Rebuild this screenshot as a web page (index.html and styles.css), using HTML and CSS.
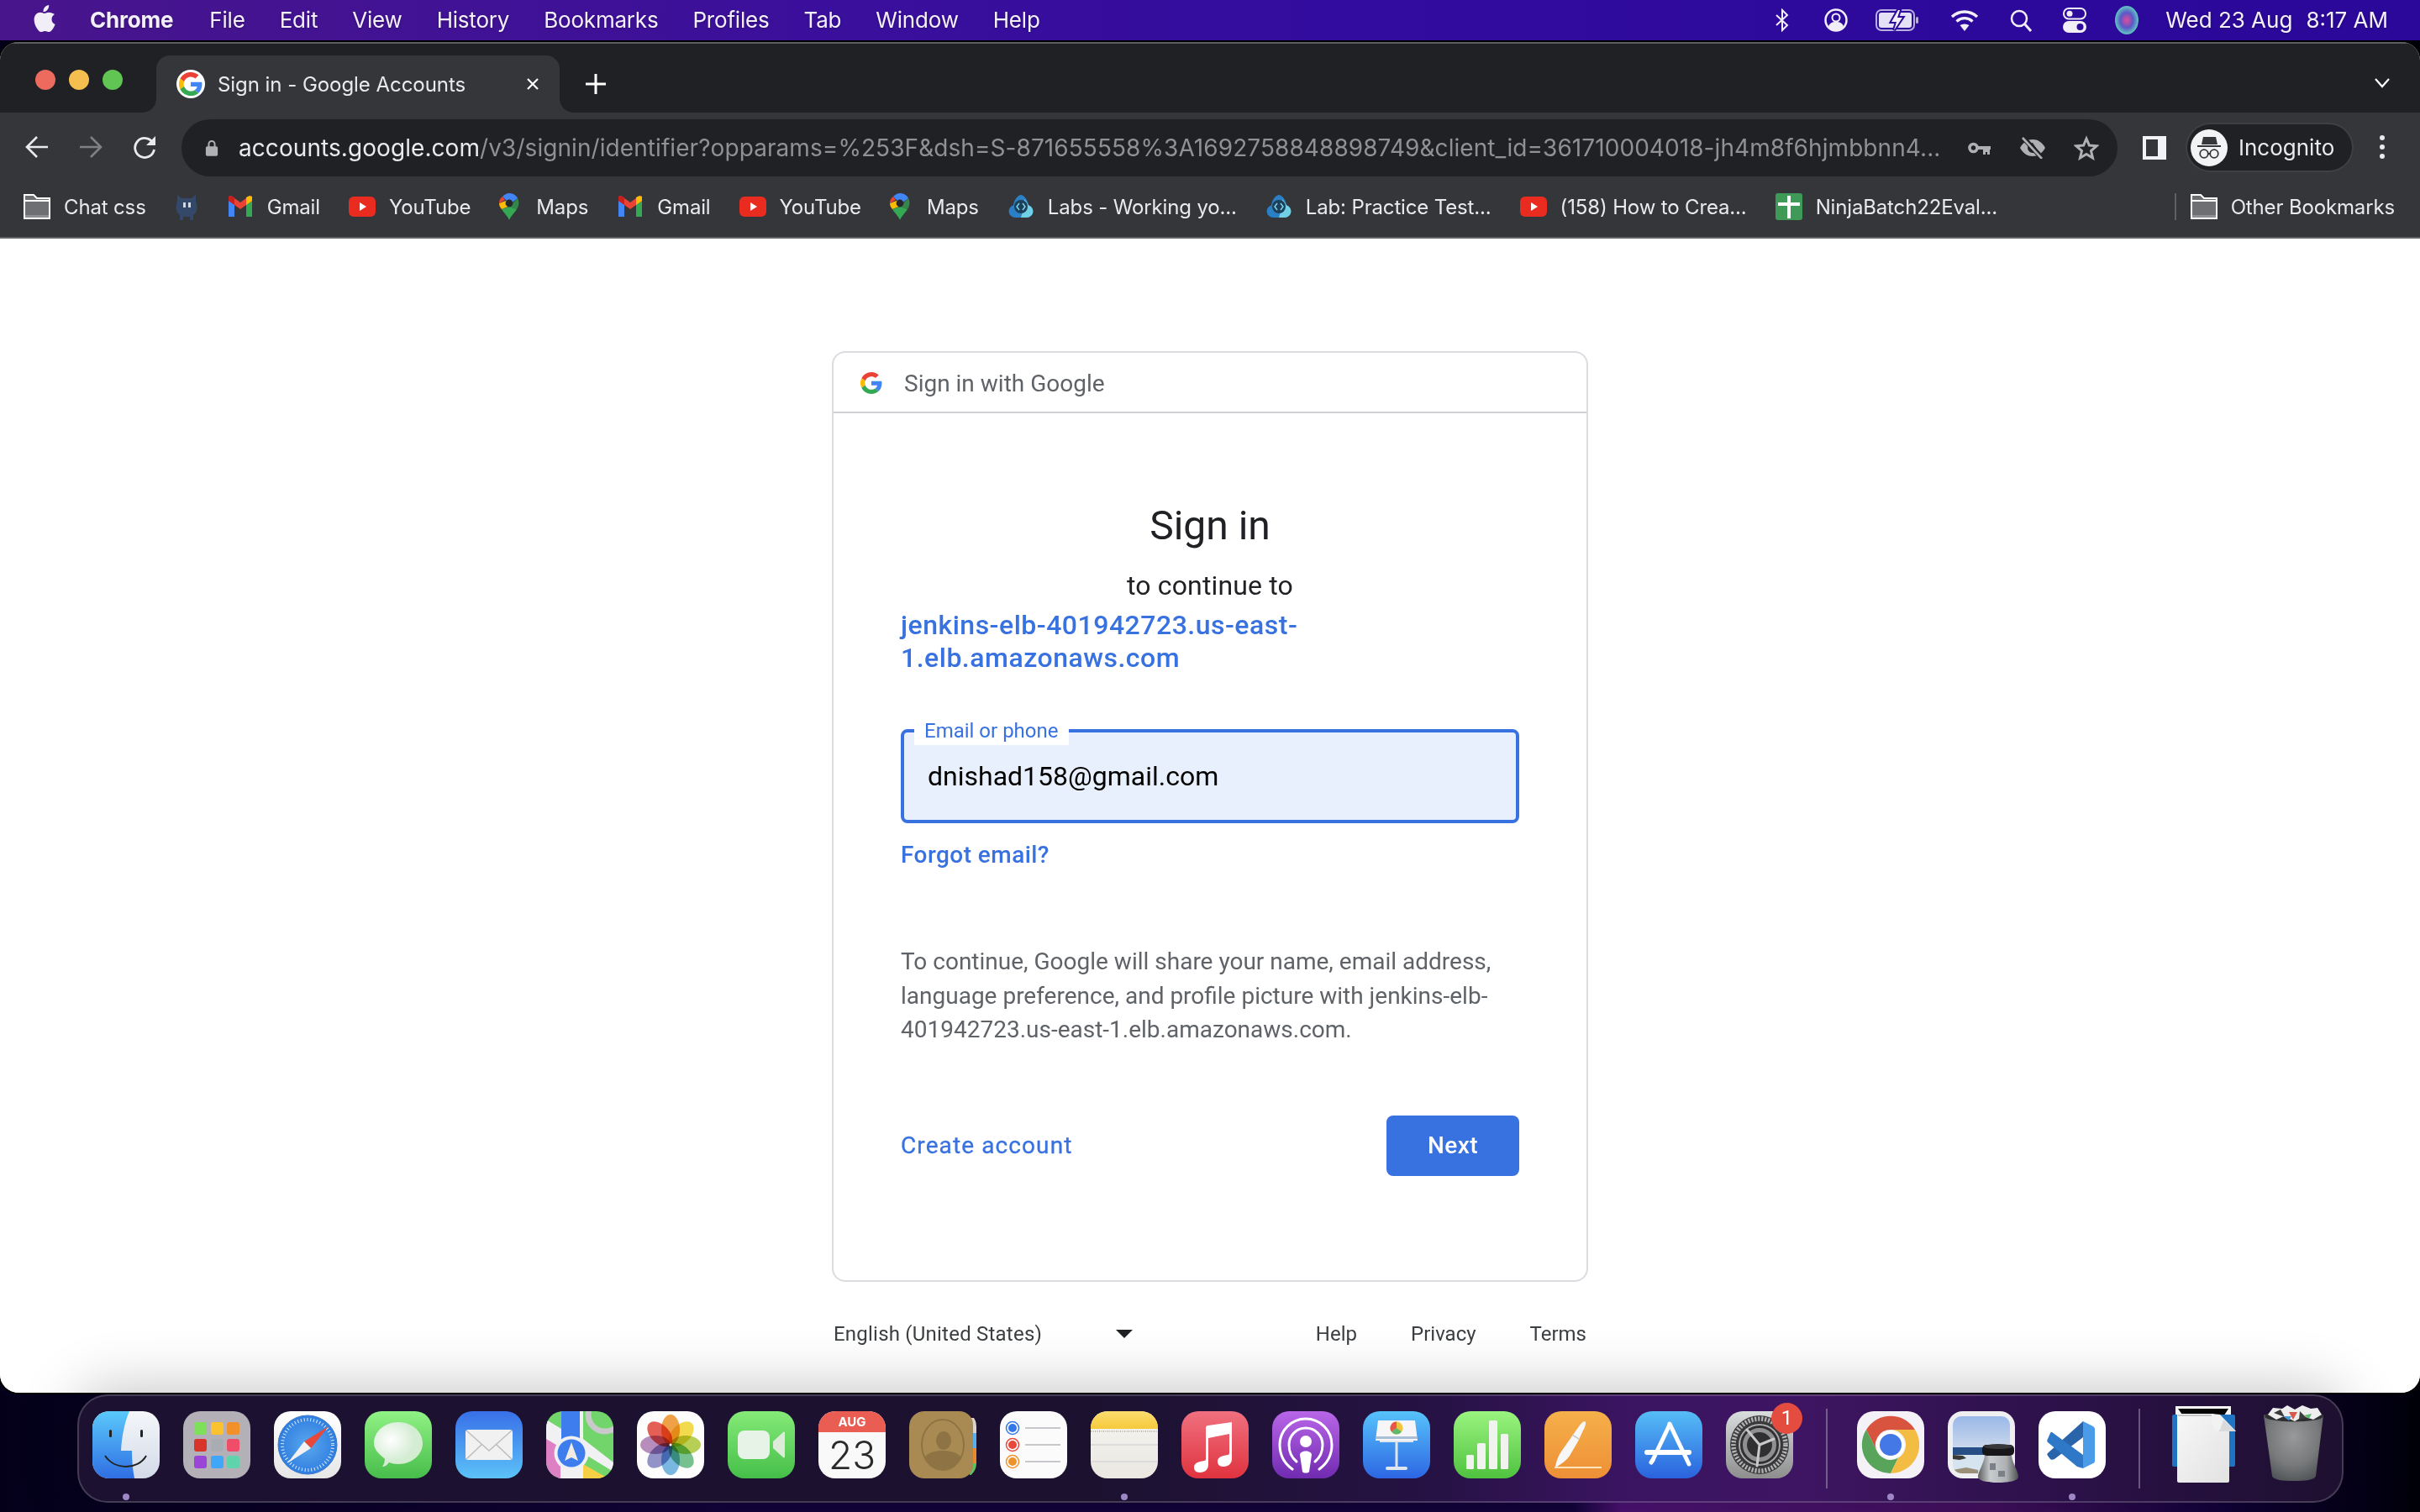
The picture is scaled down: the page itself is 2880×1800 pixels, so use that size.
FILE: index.html
```html
<!DOCTYPE html>
<html lang="en">
<head>
<meta charset="utf-8">
<title>Sign in - Google Accounts</title>
<link rel="stylesheet" href="styles.css">
</head>
<body>
<svg class="sprite" aria-hidden="true">
  <defs>
    <symbol id="g-logo" viewBox="0 0 48 48">
      <path fill="#EA4335" d="M24 9.5c3.54 0 6.71 1.22 9.21 3.6l6.85-6.85C35.9 2.38 30.47 0 24 0 14.62 0 6.51 5.38 2.56 13.22l7.98 6.19C12.43 13.72 17.74 9.5 24 9.5z"/>
      <path fill="#4285F4" d="M46.98 24.55c0-1.57-.15-3.09-.38-4.55H24v9.02h12.94c-.58 2.96-2.26 5.48-4.78 7.18l7.73 6c4.51-4.18 7.09-10.36 7.09-17.65z"/>
      <path fill="#FBBC05" d="M10.53 28.59c-.48-1.45-.76-2.99-.76-4.59s.27-3.14.76-4.59l-7.98-6.19C.92 16.46 0 20.12 0 24c0 3.88.92 7.54 2.56 10.78l7.97-6.19z"/>
      <path fill="#34A853" d="M24 48c6.48 0 11.93-2.13 15.89-5.81l-7.73-6c-2.15 1.45-4.92 2.3-8.16 2.3-6.26 0-11.57-4.22-13.47-9.91l-7.98 6.19C6.51 42.62 14.62 48 24 48z"/>
    </symbol>
    <symbol id="gmail" viewBox="0 0 32 32">
      <path fill="#4285F4" d="M2 28V7l7 5v16z"/>
      <path fill="#34A853" d="M30 28V7l-7 5v16z"/>
      <path fill="#EA4335" d="M2 4v5l14 10 14-10V4l-3-1-11 8L5 3z"/>
      <path fill="#FBBC04" d="M23 5l4-2 3 1v5l-7 5z"/>
      <path fill="#C5221F" d="M9 5L5 3 2 4v5l7 5z"/>
    </symbol>
    <symbol id="yt" viewBox="0 0 32 32">
      <rect x="0" y="4" width="32" height="24" rx="6" fill="#ea2c20"/>
      <path fill="#fff" d="M13 11l8 5-8 5z"/>
    </symbol>
    <symbol id="maps" viewBox="0 0 24 32">
      <path fill="#34A853" d="M12 32c-2-5-6-8-9-13l9-3 9 3c-3 5-7 8-9 13z"/>
      <path fill="#FBBC04" d="M3 19C1 17 0 14 0 12l8-3 5 6z"/>
      <path fill="#4285F4" d="M4 4c2-2 5-4 8-4 4 0 8 2 10 6l-9 7z"/>
      <path fill="#EA4335" d="M4 4C1 6 0 9 0 12l7-4z"/>
      <path fill="#34A853" d="M22 6c2 3 2 9-1 13l-9-3z" opacity=".7"/>
      <circle cx="12" cy="12" r="4.4" fill="#26282b"/>
    </symbol>
    <symbol id="cloud" viewBox="0 0 32 32">
      <path fill="#2b7fc4" d="M9 29a7.500 7.500 0 0 1-2-14.700C8 7 13 2 16 2s8 5 9 12.300A7.500 7.500 0 0 1 23 29z"/>
      <path fill="#6fd0e6" d="M16 29h7a7.500 7.500 0 0 0 2-14.700C24 12 22 9 20 7c1 6-2 15-4 22z"/>
      <circle cx="16" cy="16" r="8" fill="#1c3f5a"/>
      <path fill="none" stroke="#7fd2ea" stroke-width="1.500" d="M14 12l-3 4 3 4M18 12l3 4-3 4"/>
    </symbol>
    <symbol id="folder" viewBox="0 0 32 32">
      <path fill="#6e6f72" stroke="#fff" stroke-width="2" d="M1 30V2h11l4 4h15v24z"/>
      <path fill="none" stroke="#fff" stroke-width="2" d="M1 9h30"/>
      <rect x="2" y="26" width="28" height="3" fill="#8e8f92"/>
    </symbol>
  </defs>
</svg>

<header class="menubar">
  <div class="menu-left">
    <svg class="apple" viewBox="0 0 26 32"><path fill="#f1eef8" d="M18.200 0c.2 2.300-.6 4.200-1.800 5.700-1.300 1.500-3 2.400-4.900 2.300-.2-2.200.7-4.200 1.900-5.500C14.700 1.100 16.600.1 18.200 0zM25 11c-2.500 1.500-3.500 3.600-3.500 6 0 2.800 1.600 5 4.100 6-.7 2-1.700 3.900-3 5.700-1.200 1.700-2.500 3.300-4.300 3.300-1.900 0-2.500-1.100-4.700-1.100s-3 1.100-4.700 1.100c-1.900 0-3.200-1.700-4.500-3.500C2.100 25.600.6 21.200.6 17.500.6 11.900 4.300 8.800 8 8.800c1.900 0 3.500 1.200 4.700 1.200 1.200 0 3-1.300 5.200-1.300 2.700 0 5.400 1 7.100 2.300z"/></svg>
    <span class="menu-app">Chrome</span>
    <span class="menu-item">File</span>
    <span class="menu-item">Edit</span>
    <span class="menu-item">View</span>
    <span class="menu-item">History</span>
    <span class="menu-item">Bookmarks</span>
    <span class="menu-item">Profiles</span>
    <span class="menu-item">Tab</span>
    <span class="menu-item">Window</span>
    <span class="menu-item">Help</span>
  </div>
  <div class="status">
    <svg class="st st-bt" viewBox="0 0 18 28"><path fill="none" stroke="#f1eef8" stroke-width="2" d="M2 8l13 12-6 6V2l6 6L2 20"/></svg>
    <svg class="st st-user" viewBox="0 0 28 30"><circle cx="14" cy="15" r="12.500" fill="none" stroke="#f1eef8" stroke-width="2.500"/><circle cx="14" cy="12" r="4.500" fill="none" stroke="#f1eef8" stroke-width="2"/><path fill="#f1eef8" d="M5 22c2-4 5-5 9-5s7 1 9 5c-2 4-6 6-9 6s-7-2-9-6z"/></svg>
    <svg class="st st-batt" viewBox="0 0 52 30"><rect x="1" y="3" width="45" height="24" rx="6" fill="none" stroke="#b7aee0" stroke-width="2"/><rect x="4" y="6" width="39" height="18" rx="3" fill="#e4e0f6"/><rect x="48" y="11" width="3" height="8" rx="1.500" fill="#b7aee0"/><path fill="#2c0a9a" stroke="#2c0a9a" stroke-width="4" d="M27 3L19 17h6l-3 10 10-15h-6l3-9z"/><path fill="#f1eef8" d="M27 3L19 17h6l-3 10 10-15h-6l3-9z"/></svg>
    <svg class="st st-wifi" viewBox="0 0 36 28"><path fill="none" stroke="#f1eef8" stroke-width="3.500" d="M3 10c9-8 21-8 30 0M8.500 15.500c6-5 13-5 19 0"/><path fill="#f1eef8" d="M18 27l-5.500-7c3.500-2 7.500-2 11 0z"/></svg>
    <svg class="st st-search" viewBox="0 0 28 28"><circle cx="12" cy="12" r="9" fill="none" stroke="#f1eef8" stroke-width="2.500"/><path stroke="#f1eef8" stroke-width="3" d="M18.500 18.500L26 27"/></svg>
    <svg class="st st-ctrl" viewBox="0 0 28 30"><rect x="1" y="1" width="26" height="12.500" rx="6" fill="none" stroke="#f1eef8" stroke-width="2"/><circle cx="8" cy="7.200" r="3.500" fill="#f1eef8"/><rect x="0" y="16" width="28" height="14" rx="7" fill="#f1eef8"/><circle cx="20.500" cy="23" r="4" fill="#2c0a9a"/></svg>
    <svg class="st st-siri" viewBox="0 0 28 34"><defs><radialGradient id="siriG" cx=".5" cy=".5" r=".6"><stop offset="0" stop-color="#e24d9a"/><stop offset=".45" stop-color="#5a58c8"/><stop offset=".8" stop-color="#5fc0c0"/><stop offset="1" stop-color="#3d3a70"/></radialGradient></defs><ellipse cx="14" cy="17" rx="14" ry="17" fill="url(#siriG)"/></svg>
    <span class="clock">Wed 23 Aug</span>
    <span class="clock clock-time">8:17 AM</span>
  </div>
</header>

<main class="window">
  <div class="tabstrip">
    <div class="lights">
      <span class="light light-r"></span>
      <span class="light light-y"></span>
      <span class="light light-g"></span>
    </div>
    <div class="tab">
      <svg class="favicon" viewBox="-5 -5 58 58"><circle cx="24" cy="24" r="29" fill="#fff"/><use href="#g-logo" x="0" y="0" width="48" height="48"/></svg>
      <span class="tab-title">Sign in - Google Accounts</span>
      <svg class="tab-close" viewBox="0 0 16 16"><path stroke="#fff" stroke-width="2.200" d="M2 2l12 12M14 2L2 14"/></svg>
    </div>
    <svg class="tab-new" viewBox="0 0 24 24"><path stroke="#fff" stroke-width="3" d="M12 0v24M0 12h24"/></svg>
    <svg class="tab-list" viewBox="0 0 18 12"><path fill="none" stroke="#fff" stroke-width="2.200" d="M1 1l8 9 8-9"/></svg>
  </div>

  <div class="toolbar">
    <svg class="nav" viewBox="0 0 28 28"><path fill="none" stroke="#e8eaed" stroke-width="2.600" d="M27 14H3M14 2L2 14l12 12"/></svg>
    <svg class="nav" viewBox="0 0 28 28"><path fill="none" stroke="#7f8083" stroke-width="2.600" d="M1 14h24M14 2l12 12-12 12"/></svg>
    <svg class="nav" viewBox="0 0 28 28"><path fill="none" stroke="#e8eaed" stroke-width="2.800" d="M24 9a11.500 11.500 0 1 0 1.500 8"/><path fill="#e8eaed" d="M27 1v11H16z"/></svg>
    <div class="address">
      <svg class="lock" viewBox="0 0 18 22"><path fill="none" stroke="#aeb0b3" stroke-width="2.200" d="M5 10V6a4 4 0 0 1 8 0v4"/><rect x="1" y="9" width="16" height="13" rx="2" fill="#aeb0b3"/></svg>
      <div class="url"><span class="url-host">accounts.google.com</span><span class="url-rest">/v3/signin/identifier?opparams=%253F&amp;dsh=S-871655558%3A1692758848898749&amp;client_id=361710004018-jh4m8f6hjmbbnn4...</span></div>
      <svg class="addr-ic addr-key" viewBox="0 0 27 15"><circle cx="6.500" cy="7" r="4.500" fill="none" stroke="#aeb0b3" stroke-width="3.600"/><path fill="#aeb0b3" d="M11 5h16v4h-1v6h-3v-3h-2v3h-3V9h-7z"/></svg>
      <svg class="addr-ic addr-eye" viewBox="0 0 30 26"><path fill="#aeb0b3" d="M0 13C4 6 9 3 15 3s11 3 15 10c-4 7-9 10-15 10S4 20 0 13z"/><path fill="#202124" d="M9 13a6 6 0 0 1 6-6l6 9c-2 3-4 3-6 3-3 0-6-3-6-6z"/><path stroke="#202124" stroke-width="6" d="M3 0l23 25"/><path stroke="#aeb0b3" stroke-width="2.600" d="M3 1l23 25"/></svg>
      <svg class="addr-ic addr-star" viewBox="0 0 30 30"><path fill="none" stroke="#aeb0b3" stroke-width="3" d="M15 4l3.400 8 8.600.8-6.500 5.700 2 8.500-7.500-4.500L7.500 27l2-8.500L3 12.800l8.600-.8z"/></svg>
    </div>
    <div class="side-panel"><span class="side-panel-in"></span></div>
    <div class="profile">
      <svg class="profile-av" viewBox="0 0 44 44"><circle cx="22" cy="22" r="22" fill="#f1f3f4"/><path fill="#35363a" d="M15 9h15l2 9H13z"/><rect x="8" y="19" width="28" height="2" fill="#35363a"/><circle cx="16" cy="29" r="4.800" fill="none" stroke="#35363a" stroke-width="1.800"/><circle cx="28" cy="29" r="4.800" fill="none" stroke="#35363a" stroke-width="1.800"/><path stroke="#35363a" stroke-width="1.800" d="M20 29h4"/></svg>
      <span class="profile-name">Incognito</span>
    </div>
    <div class="kebab"><span></span><span></span><span></span></div>
  </div>

  <div class="bookmarks">
    <div class="bm bm-first"><svg class="bm-ic"><use href="#folder"/></svg><span>Chat css</span></div>
    <div class="bm bm-solo"><svg class="bm-ic bm-bot" viewBox="0 0 28 32"><path fill="#34486a" d="M3 2l5 4h12l5-4v8c2 4 2 9 0 13l-3 3v6h-4v-4h-8v4H6v-6l-3-3C1 19 1 14 3 10z"/><rect x="10" y="11" width="3" height="6" fill="#cfd8e6"/><rect x="16" y="11" width="3" height="6" fill="#cfd8e6"/></svg></div>
    <div class="bm"><svg class="bm-ic"><use href="#gmail"/></svg><span>Gmail</span></div>
    <div class="bm"><svg class="bm-ic"><use href="#yt"/></svg><span>YouTube</span></div>
    <div class="bm"><svg class="bm-ic bm-pin"><use href="#maps"/></svg><span>Maps</span></div>
    <div class="bm"><svg class="bm-ic"><use href="#gmail"/></svg><span>Gmail</span></div>
    <div class="bm"><svg class="bm-ic"><use href="#yt"/></svg><span>YouTube</span></div>
    <div class="bm"><svg class="bm-ic bm-pin"><use href="#maps"/></svg><span>Maps</span></div>
    <div class="bm"><svg class="bm-ic"><use href="#cloud"/></svg><span>Labs - Working yo...</span></div>
    <div class="bm"><svg class="bm-ic"><use href="#cloud"/></svg><span>Lab: Practice Test...</span></div>
    <div class="bm"><svg class="bm-ic"><use href="#yt"/></svg><span>(158) How to Crea...</span></div>
    <div class="bm"><svg class="bm-ic" viewBox="0 0 32 32"><rect width="32" height="32" rx="3" fill="#3f9a58"/><path fill="#fff" d="M14 3h4v8h11v4H18v15h-4V15H3v-4h11z"/></svg><span>NinjaBatch22Eval...</span></div>
    <div class="bm-divider"></div>
    <div class="bm bm-other"><svg class="bm-ic"><use href="#folder"/></svg><span>Other Bookmarks</span></div>
  </div>

  <section class="page">
    <div class="card">
      <div class="card-head">
        <svg class="card-logo"><use href="#g-logo"/></svg>
        <span>Sign in with Google</span>
      </div>
      <div class="card-body">
        <h1 class="title">Sign in</h1>
        <p class="subtitle">to continue to</p>
        <a class="app-link">jenkins-elb-401942723.us-east-<br>1.elb.amazonaws.com</a>
        <div class="field">
          <span class="field-label">Email or phone</span>
          <span class="field-value">dnishad158@gmail.com</span>
        </div>
        <a class="forgot">Forgot email?</a>
        <p class="notice">To continue, Google will share your name, email address, language preference, and profile picture with jenkins-elb-401942723.us-east-1.elb.amazonaws.com.</p>
        <div class="actions">
          <a class="create">Create account</a>
          <button class="next">Next</button>
        </div>
      </div>
    </div>
    <footer class="foot">
      <div class="lang"><span>English (United States)</span><i class="caret"></i></div>
      <div class="foot-links"><span>Help</span><span>Privacy</span><span>Terms</span></div>
    </footer>
  </section>
</main>

<nav class="dock">
  <div class="app"><svg class="ai" viewBox="0 0 80 80"><defs><linearGradient id="fa" x1="0" y1="0" x2="0" y2="1"><stop offset="0" stop-color="#5ac8fa"/><stop offset="1" stop-color="#2f6fe4"/></linearGradient><linearGradient id="fb" x1="0" y1="0" x2="0" y2="1"><stop offset="0" stop-color="#f4f6fa"/><stop offset="1" stop-color="#d3dbe8"/></linearGradient></defs><rect width="80" height="80" fill="url(#fb)"/><path fill="url(#fa)" d="M0 0h44c-6 14-9 30-10 47h13c0 12 1 23 3 33H0z"/><rect x="20" y="22" width="3" height="9" rx="1.500" fill="#222"/><rect x="57" y="22" width="3" height="9" rx="1.500" fill="#222"/><path fill="none" stroke="#222" stroke-width="2" d="M15 53c6 9 16 13 25 13s19-4 24-13"/></svg><i class="dot on"></i></div>
  <div class="app"><svg class="ai" viewBox="0 0 80 80"><rect width="80" height="80" fill="#b3b0b8"/><g><rect x="13" y="13" width="15" height="15" rx="3" fill="#7ee05a"/><rect x="33" y="13" width="15" height="15" rx="3" fill="#f9c22e"/><rect x="52" y="13" width="15" height="15" rx="3" fill="#f2902c"/><rect x="13" y="33" width="15" height="15" rx="3" fill="#d8342a"/><rect x="33" y="33" width="15" height="15" rx="3" fill="#a7adb2"/><rect x="52" y="33" width="15" height="15" rx="3" fill="#ef4d68"/><rect x="13" y="53" width="15" height="15" rx="3" fill="#9a44d8"/><rect x="33" y="53" width="15" height="15" rx="3" fill="#3fa6f8"/><rect x="52" y="53" width="15" height="15" rx="3" fill="#5fd3ac"/></g></svg><i class="dot"></i></div>
  <div class="app"><svg class="ai" viewBox="0 0 80 80"><defs><linearGradient id="sa" x1="0" y1="0" x2="0" y2="1"><stop offset="0" stop-color="#ffffff"/><stop offset="1" stop-color="#e6e6e6"/></linearGradient><radialGradient id="sb"><stop offset="0" stop-color="#5aa8ee"/><stop offset="1" stop-color="#2f7ee0"/></radialGradient></defs><rect width="80" height="80" fill="url(#sa)"/><circle cx="40" cy="40" r="35" fill="url(#sb)" stroke="#3b78c8" stroke-width="1"/><circle cx="40" cy="40" r="30" fill="none" stroke="#dbeafa" stroke-width="4" stroke-dasharray="1 2.800"/><path fill="#e8483a" d="M65 18L36 36l8 8z"/><path fill="#f2f2f2" d="M16 62l20-26 8 8z"/></svg><i class="dot"></i></div>
  <div class="app"><svg class="ai" viewBox="0 0 80 80"><defs><linearGradient id="ma" x1="0" y1="0" x2="0" y2="1"><stop offset="0" stop-color="#90f284"/><stop offset="1" stop-color="#47bd4b"/></linearGradient><radialGradient id="mb" cx=".35" cy=".4"><stop offset="0" stop-color="#ffffff"/><stop offset="1" stop-color="#d3ecd2"/></radialGradient></defs><rect width="80" height="80" fill="url(#ma)"/><path fill="url(#mb)" d="M40 13c16 0 29 11 29 25S56 63 40 63c-4 0-8-1-11-2-2 3-5 5-8 5 2-3 3-6 3-9-5-5-13-10-13-19 0-14 13-25 29-25z"/></svg><i class="dot"></i></div>
  <div class="app"><svg class="ai" viewBox="0 0 80 80"><defs><linearGradient id="na" x1="0" y1="0" x2="0" y2="1"><stop offset="0" stop-color="#3870e8"/><stop offset="1" stop-color="#5cc2f8"/></linearGradient></defs><rect width="80" height="80" fill="url(#na)"/><rect x="12" y="22" width="56" height="36" rx="3" fill="#f1f1f1"/><path fill="none" stroke="#bdbdbd" stroke-width="1.500" d="M13 23l27 24 27-24M13 57l19-18M67 57L48 39"/></svg><i class="dot"></i></div>
  <div class="app"><svg class="ai" viewBox="0 0 80 80"><rect width="80" height="80" fill="#71d56c"/><path fill="#f1f1f4" d="M0 10l18 11V0h26v33l36 28v11L44 50v30H14V44L0 34z"/><path fill="#dd80c4" d="M0 33l17 10v37H0z"/><path fill="#f6cf45" d="M44 63l30 17H44z"/><rect x="18" y="0" width="22" height="36" fill="#3d7ded"/><circle cx="70" cy="4" r="20" fill="none" stroke="#c9c9cc" stroke-width="7"/><circle cx="30" cy="50" r="20.500" fill="#eef0f4"/><circle cx="30" cy="50" r="16.500" fill="#3d7ded"/><path fill="#f2ece2" d="M30 37l8 22-8-4-8 4z"/></svg><i class="dot"></i></div>
  <div class="app"><svg class="ai" viewBox="0 0 80 80"><rect width="80" height="80" fill="#fdfdfd"/><g class="petals"><ellipse cx="40" cy="22" rx="11" ry="18" fill="#f09a37"/><ellipse cx="40" cy="22" rx="11" ry="18" fill="#f2d93f" transform="rotate(45 40 40)"/><ellipse cx="40" cy="22" rx="11" ry="18" fill="#b3cd45" transform="rotate(90 40 40)"/><ellipse cx="40" cy="22" rx="11" ry="18" fill="#6cbd87" transform="rotate(135 40 40)"/><ellipse cx="40" cy="22" rx="11" ry="18" fill="#6fb2e0" transform="rotate(180 40 40)"/><ellipse cx="40" cy="22" rx="11" ry="18" fill="#8a8cc6" transform="rotate(225 40 40)"/><ellipse cx="40" cy="22" rx="11" ry="18" fill="#b384b8" transform="rotate(270 40 40)"/><ellipse cx="40" cy="22" rx="11" ry="18" fill="#e4534a" transform="rotate(315 40 40)"/></g><circle cx="40" cy="40" r="1.500" fill="#fff"/></svg><i class="dot"></i></div>
  <div class="app"><svg class="ai" viewBox="0 0 80 80"><defs><linearGradient id="fta" x1="0" y1="0" x2="0" y2="1"><stop offset="0" stop-color="#85ea78"/><stop offset="1" stop-color="#45bf49"/></linearGradient></defs><rect width="80" height="80" fill="url(#fta)"/><rect x="12" y="23" width="38" height="34" rx="8" fill="#e7f3e6"/><path fill="#dcecd9" d="M54 36l12-11c1-1 2 0 2 1v28c0 1-1 2-2 1L54 44z"/></svg><i class="dot"></i></div>
  <div class="app"><div class="ai cal"><span class="cal-m">AUG</span><span class="cal-d">23</span></div><i class="dot"></i></div>
  <div class="app"><svg class="ai ai-soft" viewBox="0 0 80 80"><rect x="72" y="8" width="8" height="18" fill="#d9d5cc"/><rect x="72" y="26" width="8" height="18" fill="#58b1ea"/><rect x="72" y="44" width="8" height="18" fill="#e88a2c"/><rect x="72" y="62" width="8" height="14" fill="#62c060"/><rect width="76" height="80" rx="16" fill="#a98a52"/><ellipse cx="40" cy="40" rx="25" ry="30" fill="none" stroke="#8e7444" stroke-width="2"/><ellipse cx="41" cy="35" rx="9" ry="11" fill="#8e7444"/><path fill="#8e7444" d="M18 55c5-6 13-8 22-8s17 2 22 8c-4 9-13 14-22 14s-18-5-22-14z"/></svg><i class="dot"></i></div>
  <div class="app"><svg class="ai" viewBox="0 0 80 80"><rect width="80" height="80" fill="#fbfbfb"/><g fill="#fff" stroke-width="1.500"><circle cx="15" cy="20" r="7.500" stroke="#3478e8"/><circle cx="15" cy="40" r="7.500" stroke="#e8483a"/><circle cx="15" cy="60" r="7.500" stroke="#ee922c"/></g><circle cx="15" cy="20" r="5" fill="#3478e8"/><circle cx="15" cy="40" r="5" fill="#e8483a"/><circle cx="15" cy="60" r="5" fill="#ee922c"/><path stroke="#c8c8cc" stroke-width="2" d="M30 20h42M30 40h42M30 60h42"/></svg><i class="dot"></i></div>
  <div class="app"><svg class="ai" viewBox="0 0 80 80"><defs><linearGradient id="noa" x1="0" y1="0" x2="0" y2="1"><stop offset="0" stop-color="#fbdd6e"/><stop offset="1" stop-color="#f6c93c"/></linearGradient><linearGradient id="nob" x1="0" y1="0" x2="0" y2="1"><stop offset="0" stop-color="#f6f5f0"/><stop offset="1" stop-color="#e9e7e0"/></linearGradient></defs><rect width="80" height="80" fill="url(#nob)"/><rect width="80" height="21" fill="url(#noa)"/><path stroke="#b9b7b0" stroke-width="2" stroke-dasharray="1 1.500" d="M0 24h80"/><path stroke="#d8d6d8" stroke-width="1.500" d="M0 40h80M0 60h80"/></svg><i class="dot on"></i></div>
  <div class="app"><svg class="ai" viewBox="0 0 80 80"><defs><linearGradient id="mua" x1="0" y1="0" x2="0" y2="1"><stop offset="0" stop-color="#f0707f"/><stop offset="1" stop-color="#e0333f"/></linearGradient></defs><rect width="80" height="80" fill="url(#mua)"/><path fill="#fff" d="M60 13v44c0 5-4 9-10 9-5 0-7-3-7-6 0-4 3-6 7-7l5-1c2 0 2-2 2-3V27l-25 5v32c0 5-4 9-10 9-5 0-7-3-7-6 0-4 3-6 7-7l5-1c2 0 2-2 2-3V20c0-2 1-3 3-3z"/></svg><i class="dot"></i></div>
  <div class="app"><svg class="ai" viewBox="0 0 80 80"><defs><linearGradient id="poa" x1="0" y1="0" x2="0" y2="1"><stop offset="0" stop-color="#b966e8"/><stop offset="1" stop-color="#702bb0"/></linearGradient></defs><rect width="80" height="80" fill="url(#poa)"/><g fill="none" stroke="#fff" stroke-linecap="round"><path stroke-width="3" d="M24 69C13 61 9 50 9 40a31 31 0 0 1 62 0c0 10-4 21-15 29"/><path stroke-width="3" d="M29 60c-6-5-9-12-9-20a20 20 0 0 1 40 0c0 8-3 15-9 20"/></g><circle cx="40" cy="36" r="7" fill="#fff"/><path fill="#fff" d="M33 52c0-6 14-6 14 0l-3 20c-1 2-7 2-8 0z"/></svg><i class="dot"></i></div>
  <div class="app"><svg class="ai" viewBox="0 0 80 80"><defs><linearGradient id="ka" x1="0" y1="0" x2="0" y2="1"><stop offset="0" stop-color="#57c3fb"/><stop offset="1" stop-color="#2d66e4"/></linearGradient></defs><rect width="80" height="80" fill="url(#ka)"/><path fill="#f6f6f8" d="M18 11h44l3 24H15z"/><rect x="15" y="30" width="50" height="3" fill="#a9bfd6"/><rect x="20" y="35" width="40" height="2" fill="#dfe6ee"/><circle cx="40" cy="20" r="7.500" fill="#f0c43c"/><path fill="#e8584a" d="M40 20v-7.500a7.500 7.500 0 0 0-6 12z"/><path fill="#5fb86c" d="M40 20l6 4.500a7.500 7.500 0 0 1-12 0z"/><rect x="38.500" y="37" width="3" height="29" fill="#dfe6ee"/><rect x="27" y="66" width="26" height="4" rx="2" fill="#dfe6ee"/></svg><i class="dot"></i></div>
  <div class="app"><svg class="ai" viewBox="0 0 80 80"><defs><linearGradient id="nua" x1="0" y1="0" x2="0" y2="1"><stop offset="0" stop-color="#9af47f"/><stop offset="1" stop-color="#4fc23f"/></linearGradient></defs><rect width="80" height="80" fill="url(#nua)"/><g fill="#f1f4ee"><rect x="15" y="52" width="9" height="17" rx="1.500"/><rect x="28" y="38" width="10" height="31" rx="1.500"/><rect x="42" y="11" width="10" height="58" rx="1.500"/><rect x="56" y="27" width="9" height="42" rx="1.500"/></g></svg><i class="dot"></i></div>
  <div class="app"><svg class="ai" viewBox="0 0 80 80"><defs><linearGradient id="paa" x1="0" y1="0" x2="0" y2="1"><stop offset="0" stop-color="#f5b04a"/><stop offset="1" stop-color="#ee8f36"/></linearGradient></defs><rect width="80" height="80" fill="url(#paa)"/><path fill="#fbe3c0" d="M12 66h56v2H12z"/><path fill="#f7f7f7" d="M13 66c1-6 3-12 7-18l19-27c4-6 7-9 9-9 2 1 1 6-2 11L40 36l-3 5-7 12c-3 5-9 9-15 13z"/><path stroke="#c9c9c9" stroke-width="1.500" d="M33 28l8 5"/></svg><i class="dot"></i></div>
  <div class="app"><svg class="ai" viewBox="0 0 80 80"><defs><linearGradient id="asa" x1="0" y1="0" x2="0" y2="1"><stop offset="0" stop-color="#56bdf6"/><stop offset="1" stop-color="#2a62de"/></linearGradient></defs><rect width="80" height="80" fill="url(#asa)"/><g stroke="#fff" stroke-linecap="round" fill="none"><path stroke-width="5" d="M41 16L21 58"/><path stroke-width="5" d="M41 15l23 48"/><path stroke-width="6" d="M14 49h50"/><path stroke-width="5" d="M21 58l-2 3"/></g></svg><i class="dot"></i></div>
  <div class="app"><svg class="ai" viewBox="0 0 80 80"><defs><linearGradient id="sta" x1="0" y1="0" x2="0" y2="1"><stop offset="0" stop-color="#d9dddd"/><stop offset="1" stop-color="#8e8e8e"/></linearGradient></defs><rect width="80" height="80" fill="url(#sta)"/><circle cx="40" cy="40" r="35" fill="#3b3b3d"/><circle cx="40" cy="40" r="31" fill="none" stroke="#b4b4b6" stroke-width="5.500" stroke-dasharray="2.200 1.800"/><circle cx="40" cy="40" r="26" fill="#303032"/><circle cx="40" cy="40" r="24" fill="none" stroke="#a9a9ab" stroke-width="2"/><circle cx="40" cy="40" r="17.500" fill="none" stroke="#8f8f91" stroke-width="5"/><path fill="none" stroke="#c8c8ca" stroke-width="3" stroke-linecap="round" d="M40 40L25 22M40 40l17-7M40 40l-3 25"/></svg><span class="badge">1</span><i class="dot"></i></div>
  <div class="sep"></div>
  <div class="app"><svg class="ai" viewBox="0 0 80 80"><rect width="80" height="80" fill="#f4f2f6"/><path fill="#d9543f" d="M11 22A34 34 0 0 1 69 22H40A18 18 0 0 0 24.400 49z"/><path fill="#57a45a" d="M11 22L24.400 49A18 18 0 0 0 49 55.600L40 74A34 34 0 0 1 11 22z"/><path fill="#f2bd42" d="M69 22H40A18 18 0 0 1 49 55.600L40 74A34 34 0 0 0 69 22z"/><circle cx="40" cy="40" r="16.500" fill="#fff"/><circle cx="40" cy="40" r="13" fill="#4378e6"/></svg><i class="dot on"></i></div>
  <div class="app"><svg class="ai ai-free" viewBox="0 0 80 86"><defs><linearGradient id="pra" x1="0" y1="0" x2="0" y2="1"><stop offset="0" stop-color="#9ab8e8"/><stop offset="1" stop-color="#cbd8ec"/></linearGradient><linearGradient id="prb" x1="0" y1="0" x2="1" y2="0"><stop offset="0" stop-color="#5c5e60"/><stop offset=".3" stop-color="#c9ccce"/><stop offset=".7" stop-color="#aeb1b3"/><stop offset="1" stop-color="#4e5052"/></linearGradient><clipPath id="prc"><rect x="6" y="6" width="68" height="68" rx="10"/></clipPath></defs><rect width="80" height="80" rx="18" fill="#efeff1"/><g clip-path="url(#prc)"><rect x="6" y="6" width="68" height="38" fill="url(#pra)"/><rect x="6" y="43" width="68" height="9" fill="#274f86"/><rect x="6" y="52" width="68" height="22" fill="#d5e4ef"/><path fill="#3b3a36" d="M6 52l12 1 4 3-8 2-8-1z"/><path fill="#9c8f78" d="M6 74v-4l16-3 14 3v4z"/></g><rect x="41" y="40" width="38" height="13" rx="5" fill="#17171a"/><ellipse cx="60" cy="42" rx="17" ry="3" fill="#38383a"/><path fill="url(#prb)" d="M44 53h32c1 9 8 19 8 25 0 5-12 7-24 7s-24-2-24-7c0-6 7-16 8-25z"/><rect x="50" y="62" width="7" height="8" fill="#7c8088"/><rect x="60" y="71" width="8" height="7" fill="#7c8088"/></svg><i class="dot"></i></div>
  <div class="app"><svg class="ai" viewBox="0 0 80 80"><rect width="80" height="80" fill="#fff"/><path fill="#2a64ab" d="M53 12v19L19 57c-2 1-4 1-5 0l-3-4c-1-1-1-3 1-4z"/><path fill="#2f78c8" d="M16 25l37 27v16l-7-2-35-29c-1-1-1-3 0-4l3-7c0-1 1-1 2-1z"/><path fill="#4a9be8" d="M53 12l12 6c1 1 2 2 2 3v38c0 2-1 3-2 3l-12 6z"/></svg><i class="dot on"></i></div>
  <div class="sep sep-b"></div>
  <div class="app"><svg class="ai-tall" viewBox="0 0 80 100"><defs><linearGradient id="doa" x1="0" y1="0" x2="1" y2="1"><stop offset="0" stop-color="#f7f7f7"/><stop offset="1" stop-color="#e2e2e2"/></linearGradient></defs><rect x="7" y="2" width="66" height="30" fill="#f6f6f6"/><path fill="#050505" d="M10 5h60l-9 14H20z"/><rect x="3" y="12" width="75" height="62" rx="2" fill="#1f74c2"/><path fill="url(#doa)" d="M9 11h43l19 21v59c0 1-1 2-2 2H11c-1 0-2-1-2-2z"/><path fill="#c9c9c9" d="M10 12h40v2H10z"/><path fill="#f2f2f2" d="M50 11c0 13 2 21 8 21h21L60 12z"/><path fill="#d9dadc" d="M58 32h21L64 18c-2 6-3 12-6 14z"/></svg><i class="dot"></i></div>
  <div class="app"><svg class="ai-tall" viewBox="0 0 80 100"><defs><radialGradient id="tra" cx=".5" cy=".35" r=".7"><stop offset="0" stop-color="#97999a"/><stop offset=".6" stop-color="#77797b"/><stop offset="1" stop-color="#4f5254"/></radialGradient></defs><path fill="url(#tra)" d="M4 13c4-4 67-4 71 0l-9 72c-1 5-13 6-26 6s-25-1-26-6z"/><ellipse cx="40" cy="14" rx="35" ry="6.500" fill="#2f2f32"/><path fill="#eeeeee" d="M9 12l6-8 11 1 6-4 9 5 9-5 10 4 8-1 5 8-10 6-12-4-10 6-13-6-9 4z"/><path fill="#3b3b3e" d="M16 10l8-4 5 9zM47 8l8 8-9 2z"/><path fill="#d8574e" d="M34 9l5 9 5-9z"/><path fill="#4a9ad8" d="M27 14l7 5 3-5z"/><path fill="#5cb870" d="M52 13l6 4 3-6z"/></svg><i class="dot"></i></div>
</nav>
</body>
</html>
```
FILE: styles.css
```css
* { box-sizing: border-box; }
html, body { margin: 0; padding: 0; }
body {
  width: 2880px;
  height: 1800px;
  overflow: hidden;
  display: flex;
  flex-direction: column;
  background: linear-gradient(90deg, #04001a 0%, #0a0128 12%, #12043a 30%, #12043a 65%, #4b1272 67%, #43105f 82%, #100238 92%, #000008 100%);
  font-family: "Roboto", "Liberation Sans", sans-serif;
}
.sprite { width: 0; height: 0; display: block; flex: none; }

/* menu bar */
.menubar {
  height: 48px;
  flex: none;
  display: flex;
  align-items: center;
  justify-content: space-between;
  background: linear-gradient(90deg, #48158c 0%, #3a0f9c 35%, #300b9e 60%, #2b0899 100%);
  color: #f3f0fa;
  font-family: "Inter", "Liberation Sans", sans-serif;
  font-size: 26px;
  text-shadow: 0 1px 3px rgba(0,0,0,.3);
}
.menu-left { display: flex; align-items: center; padding-left: 40px; padding-bottom: 2px; gap: 41px; letter-spacing: -.2px; }
.apple { width: 26px; height: 32px; margin-right: 0; margin-top: -2px; }
.menu-app { font-weight: 700; margin-right: 2px; }
.status { display: flex; align-items: center; }
.st { flex: none; }
.st-bt { width: 18px; height: 28px; margin-right: 41px; }
.st-user { width: 28px; height: 30px; margin-right: 33px; }
.st-batt { width: 52px; height: 30px; margin-right: 36px; }
.st-wifi { width: 36px; height: 28px; margin-right: 35px; }
.st-search { width: 28px; height: 28px; margin-right: 36px; }
.st-ctrl { width: 28px; height: 30px; margin-right: 34px; }
.st-siri { width: 28px; height: 34px; margin-right: 32px; }
.clock { white-space: nowrap; padding-bottom: 2px; }
.clock-time { margin-left: 16px; margin-right: 38px; }

/* browser window */
.window {
  flex: none;
  height: 1608px;
  margin-top: 2px;
  display: flex;
  flex-direction: column;
  border-radius: 22px;
  overflow: hidden;
  background: #fff;
  box-shadow: 0 0 0 2px #000;
  color: #e8eaed;
}
.tabstrip {
  height: 84px;
  flex: none;
  display: flex;
  align-items: flex-end;
  background: #202124;
  border-top: 2px solid #5c5d60;
}
.lights { display: flex; gap: 16px; width: 186px; padding-left: 42px; align-self: flex-start; padding-top: 31px; }
.light { width: 24px; height: 24px; border-radius: 50%; }
.light-r { background: #ec6a5e; }
.light-y { background: #f4bf4f; }
.light-g { background: #61c554; }
.tab {
  position: relative;
  width: 480px;
  height: 68px;
  display: flex;
  align-items: center;
  padding: 0 24px;
  background: #35363a;
  border-radius: 16px 16px 0 0;
  font-family: "Inter", "Liberation Sans", sans-serif;
  font-size: 24px;
  letter-spacing: -.05px;
  color: #e8eaed;
}
.tab::before, .tab::after {
  content: "";
  position: absolute;
  bottom: 0;
  width: 16px;
  height: 16px;
}
.tab::before { left: -16px; background: radial-gradient(circle at 0 0, #202124 15.500px, #35363a 16px); }
.tab::after { right: -16px; background: radial-gradient(circle at 100% 0, #202124 15.500px, #35363a 16px); }
.favicon { width: 34px; height: 34px; flex: none; }
.tab-title { margin-left: 15px; flex: 1; white-space: nowrap; }
.tab-close { width: 16px; height: 16px; flex: none; margin-right: 0; }
.tab-new { width: 24px; height: 24px; margin: 0 0 22px 31px; flex: none; }
.tab-list { width: 18px; height: 12px; margin: 0 36px 29px auto; flex: none; }

.toolbar {
  height: 76px;
  flex: none;
  display: flex;
  align-items: flex-end;
  background: #35363a;
  padding-left: 12px;
}
.nav { width: 28px; height: 28px; flex: none; margin: 0 18px 21px 18px; }
.address {
  width: 2304px;
  height: 68px;
  flex: none;
  margin-left: 12px;
  display: flex;
  align-items: center;
  padding: 0 22px 0 28px;
  background: #202124;
  border-radius: 34px;
}
.lock { width: 16px; height: 20px; flex: none; }
.url {
  margin-left: 24px;
  flex: 1;
  min-width: 0;
  white-space: nowrap;
  overflow: hidden;
  font-family: "Inter", "Liberation Sans", sans-serif;
  font-size: 28px;
  letter-spacing: .07px;
  color: #8f9194;
}
.url-host { color: #e8eaed; }
.addr-ic { flex: none; margin-left: 30px; }
.addr-key { width: 27px; height: 15px; margin-left: 28px; }
.addr-eye { width: 30px; height: 26px; margin-left: 35px; }
.addr-star { width: 30px; height: 30px; margin-left: 34px; }
.side-panel {
  width: 28px;
  height: 28px;
  flex: none;
  margin: 0 25px 20px 30px;
  background: #f1f3f4;
  padding: 4px 10px 4px 4px;
}
.side-panel-in { display: block; height: 100%; background: #35363a; }
.profile {
  width: 196px;
  height: 55px;
  flex: none;
  margin-bottom: 7px;
  display: flex;
  align-items: center;
  padding: 0 0 0 4px;
  background: #202124;
  border-radius: 28px;
  box-shadow: 0 0 0 2px #3f4044;
  font-family: "Inter", "Liberation Sans", sans-serif;
  font-size: 26px;
}
.profile-av { width: 44px; height: 44px; flex: none; }
.profile-name { margin-left: 13px; }
.kebab {
  flex: none;
  margin: 0 0 21px 33px;
  display: flex;
  flex-direction: column;
  gap: 5px;
}
.kebab span { width: 6px; height: 6px; border-radius: 50%; background: #e8eaed; }

.bookmarks {
  height: 74px;
  flex: none;
  display: flex;
  align-items: center;
  padding: 0 30px 0 28px;
  gap: 34px;
  background: #35363a;
  border-bottom: 2px solid #5f6064;
  font-family: "Inter", "Liberation Sans", sans-serif;
  font-size: 24px;
  letter-spacing: -.15px;
  color: #e8eaed;
  white-space: nowrap;
}
.bm { display: flex; align-items: center; gap: 16px; flex: none; }
.bm-ic { width: 32px; height: 32px; flex: none; }
.bm-bot { width: 28px; height: 32px; }
.bm-pin { width: 24px; height: 32px; margin-right: 4px; }
.bm-divider { width: 2px; height: 32px; background: #5f6064; margin-left: auto; margin-right: -17px; flex: none; }

/* page */
.page { flex: 1; min-height: 0; background: #fff; color: #202124; padding-top: 134px; }
.card {
  width: 900px;
  height: 1108px;
  margin-left: 990px;
  border: 2px solid #dadce0;
  border-radius: 16px;
}
.card-head {
  height: 72px;
  display: flex;
  align-items: center;
  padding: 2px 0 0 32px;
  border-bottom: 2px solid #cfd1d4;
  font-size: 28px;
  color: #5f6368;
}
.card-logo { width: 26px; height: 26px; margin-right: 26px; flex: none; }
.card-body { padding: 0 80px; }
.title { margin: 102px 0 0; font-size: 48px; line-height: 64px; font-weight: 400; text-align: center; color: #202124; }
.subtitle { margin: 19px 0 0; font-size: 32px; line-height: 40px; letter-spacing: .15px; text-align: center; color: #202124; }
.app-link { display: block; margin-top: 8px; font-size: 32px; line-height: 39px; letter-spacing: .5px; font-weight: 500; color: #3871e0; }
.field {
  position: relative;
  height: 112px;
  margin-top: 65px;
  display: flex;
  align-items: center;
  padding-left: 28px;
  background: #e8f0fe;
  border: 4px solid #3871e0;
  border-radius: 8px;
}
.field-label {
  position: absolute;
  left: 12px;
  top: -17px;
  padding: 0 12px;
  height: 32px;
  line-height: 30px;
  background: #fff;
  font-size: 24px;
  color: #3871e0;
}
.field-value { font-size: 32px; color: #000; }
.forgot { display: block; margin-top: 18px; font-size: 28px; line-height: 40px; letter-spacing: .45px; font-weight: 500; color: #3871e0; }
.notice { margin: 87px 0 0; font-size: 28px; line-height: 40.5px; color: #5f6368; }
.actions { margin-top: 81px; display: flex; align-items: center; justify-content: space-between; }
.create { font-size: 28px; font-weight: 400; letter-spacing: 1.1px; color: #3871e0; -webkit-text-stroke: .3px #3871e0; }
.next {
  width: 158px;
  height: 72px;
  border: 0;
  border-radius: 8px;
  background: #3871e0;
  color: #fff;
  font-family: inherit;
  font-size: 28px;
  font-weight: 500;
  letter-spacing: .4px;
}
.foot {
  width: 900px;
  margin: 46px 0 0 990px;
  padding: 0 2px;
  display: flex;
  justify-content: space-between;
  font-size: 24px;
  line-height: 32px;
  color: #3c4043;
}
.lang { display: flex; align-items: center; width: 356px; justify-content: space-between; letter-spacing: .22px; }
.caret { width: 0; height: 0; border-left: 10px solid transparent; border-right: 10px solid transparent; border-top: 10px solid #202124; }
.foot-links { display: flex; gap: 64px; }

/* dock */
.dock {
  position: relative;
  flex: none;
  width: 2697px;
  height: 129px;
  margin: 2px 0 0 92px;
  padding-left: 16px;
  display: flex;
  align-items: flex-start;
  gap: 28px;
  background: linear-gradient(90deg, #1c1130 0%, #1c1230 45%, #261244 60%, #3a1460 68%, #3e1562 76%, #2b1148 88%, #1e1030 100%);
  border: 2px solid rgba(255,255,255,.18);
  border-radius: 36px;
  box-shadow: 0 -6px 70px rgba(0,0,0,.24);
}
.app { position: relative; width: 80px; flex: none; padding-top: 18px; display: flex; flex-direction: column; align-items: center; }
.ai { width: 80px; height: 80px; display: block; border-radius: 20px; flex: none; }
.ai-soft { border-radius: 18px; }
.ai-free { height: 86px; margin-bottom: -6px; overflow: visible; border-radius: 0; }
.ai-tall { width: 80px; height: 100px; display: block; margin: -8px 0 -12px; }
.petals ellipse { mix-blend-mode: multiply; opacity: .92; }
.cal { display: flex; flex-direction: column; align-items: center; background: #f9f9f9; font-family: "Inter", "Liberation Sans", sans-serif; }
.cal-m { width: 100%; height: 25px; flex: none; background: #e95d52; border-radius: 20px 20px 0 0; color: #fff; font-size: 15px; font-weight: 700; line-height: 25px; text-align: center; }
.cal-d { height: 55px; flex: none; color: #2a2a2a; font-size: 46px; font-weight: 300; line-height: 55px; }
.dot { width: 8px; height: 8px; margin-top: 18px; border-radius: 50%; background: transparent; }
.dot.on { background: #9d87c4; }
.badge {
  position: absolute;
  top: 8px;
  right: -11px;
  width: 37px;
  height: 37px;
  border-radius: 50%;
  background: #e34c3e;
  color: #fff;
  font-size: 24px;
  line-height: 37px;
  text-align: center;
}
.sep { width: 2px; height: 95px; flex: none; margin: 15px 7px 0 11px; background: rgba(255,255,255,.3); }
```
